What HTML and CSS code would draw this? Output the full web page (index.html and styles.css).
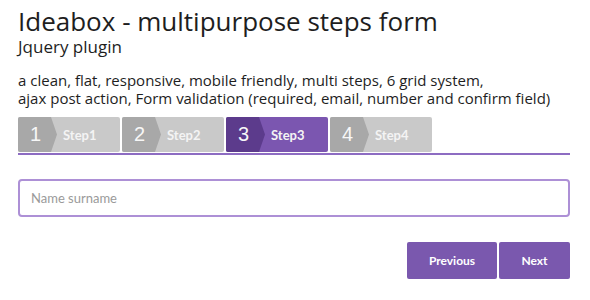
FILE: index.html
```html
<!DOCTYPE html>
<html lang="en">
<head>
    <meta charset="UTF-8" />
    <title>Ideabox - multipurpose steps form</title>
    <link rel="stylesheet" href="styles.css">
</head>
<body>
    <div class="page">
        <div class="intro">
            <h1>Ideabox - multipurpose steps form</h1>
            <h2>Jquery plugin</h2>
            <p>a clean, flat, responsive, mobile friendly, multi steps, 6 grid system,<br>ajax post action, Form validation (required, email, number and confirm field)</p>
        </div>

        <div class="steps">
            <div class="step">
                <span class="step-num">1</span>
                <span class="step-label">Step1</span>
            </div>
            <div class="step">
                <span class="step-num">2</span>
                <span class="step-label">Step2</span>
            </div>
            <div class="step active">
                <span class="step-num">3</span>
                <span class="step-label">Step3</span>
            </div>
            <div class="step">
                <span class="step-num">4</span>
                <span class="step-label">Step4</span>
            </div>
        </div>

        <div class="field">
            <input type="text" class="text-input" placeholder="Name surname" autofocus />
        </div>

        <div class="actions">
            <button class="btn btn-prev">Previous</button>
            <button class="btn btn-next">Next</button>
        </div>
    </div>
</body>
</html>
```

FILE: styles.css
```css
* {
    box-sizing: border-box;
    margin: 0;
    padding: 0;
}
body {
    font-family: 'Open Sans', 'Liberation Sans', sans-serif;
    background: #fff;
    color: #1e1e1e;
}
.page {
    width: 590px;
    padding: 5px 20px 0 18px;
}
.intro h1 {
    font-size: 26px;
    font-weight: 400;
    line-height: 32px;
}
.intro h2 {
    font-size: 17px;
    font-weight: 400;
    line-height: 20px;
}
.intro p {
    font-size: 15px;
    line-height: 18px;
    margin-top: 14px;
}
.steps {
    display: flex;
    gap: 2px;
    margin-top: 10px;
    padding-bottom: 1px;
    border-bottom: 2px solid #8d6cc2;
}
.step {
    width: 102px;
    height: 35px;
    border-radius: 2px;
    background: #c9c9c9;
    display: flex;
    align-items: center;
    overflow: hidden;
}
.step-num {
    width: 39px;
    height: 100%;
    background: #a8a8a8;
    clip-path: polygon(0 0, 33px 0, 39px 50%, 33px 100%, 0 100%);
    font-family: 'Liberation Sans', Arial, sans-serif;
    font-size: 20px;
    color: #f7f7f7;
    display: flex;
    align-items: center;
    padding-left: 12px;
}
.step-label {
    margin-left: 6px;
    font-family: Lato, sans-serif;
    font-weight: 700;
    font-size: 13px;
    color: #f4f4f4;
}
.step.active {
    background: #7b56b0;
}
.step.active .step-num {
    background: #5c3b8c;
}
.field {
    margin-top: 24px;
}
.text-input {
    width: 100%;
    height: 38px;
    border: 2px solid #ad90d6;
    border-radius: 4px;
    padding: 0 11px;
    font-family: Lato, sans-serif;
    font-size: 13px;
    color: #333;
    caret-color: #333;
    outline: none;
}
.text-input::placeholder {
    color: #9a9a9a;
}
.actions {
    display: flex;
    justify-content: flex-end;
    gap: 2px;
    margin-top: 25px;
}
.btn {
    height: 37px;
    border: none;
    border-radius: 2px;
    background: #7a58ae;
    color: #fff;
    font-family: Lato, sans-serif;
    font-weight: 700;
    font-size: 12px;
    cursor: pointer;
}
.btn-prev {
    width: 90px;
}
.btn-next {
    width: 71px;
}
```
